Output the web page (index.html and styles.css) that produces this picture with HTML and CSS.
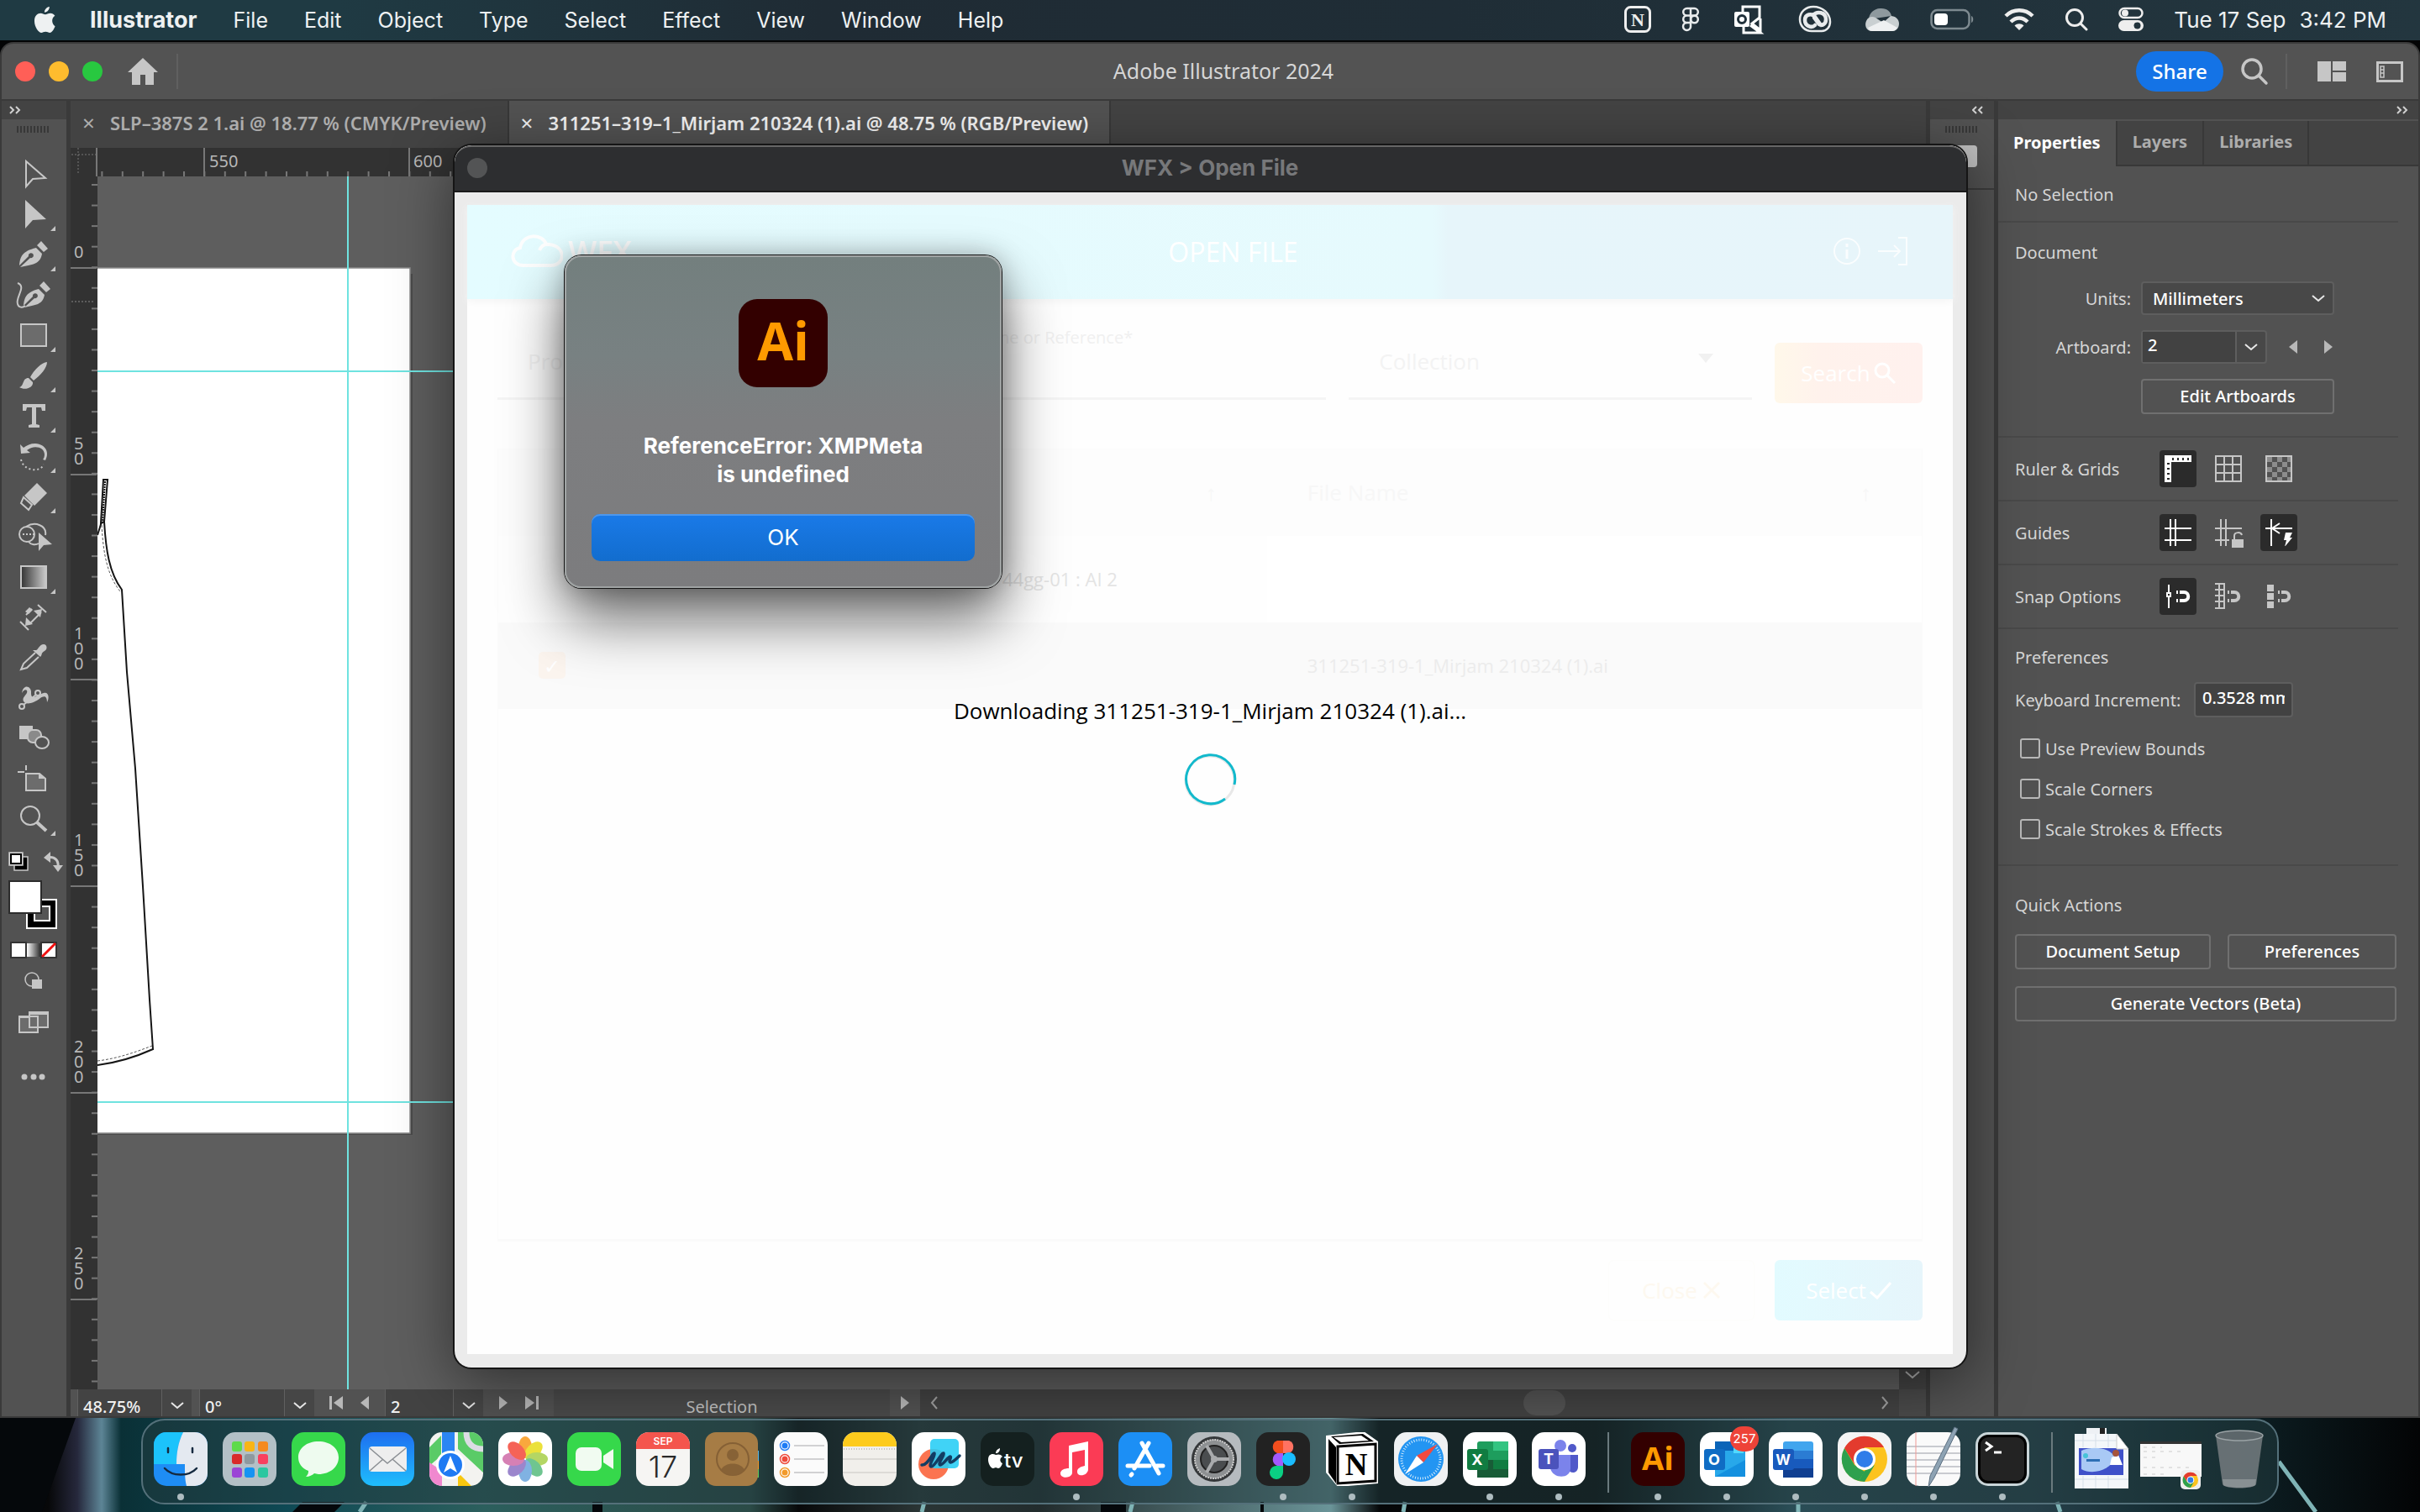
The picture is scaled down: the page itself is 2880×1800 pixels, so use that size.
FILE: index.html
```html
<!DOCTYPE html>
<html lang="en">
<head>
<meta charset="utf-8">
<title>Adobe Illustrator 2024</title>
<link rel="stylesheet" href="styles.css">
</head>
<body>
<header class="menubar">
  <svg class="apple" viewBox="0 0 28 34"><path fill="#eef1f2" d="M19.500 1c.3 3-2.600 7-6 7-.4-3 2.600-6.500 6-7zM26.500 25c-1.500 4-4 8-6.500 8-2 0-2.700-1.200-5.200-1.200S11.400 33 9.600 33C6.200 33 1 26 1 18.500 1 12 5 9 8.600 9c2.400 0 4 1.500 5.800 1.500S17.800 9 20.800 9c2 0 4.200 1.100 5.500 3-4.800 2.800-4 10 .2 13z"/></svg>
  <nav class="menus">
    <b>Illustrator</b><span>File</span><span>Edit</span><span>Object</span><span>Type</span><span>Select</span><span>Effect</span><span>View</span><span>Window</span><span>Help</span>
  </nav>
  <div class="tray">
    <svg width="32" height="34" viewBox="0 0 32 34"><rect x="1.500" y="2.500" width="29" height="29" rx="6" fill="none" stroke="#eee" stroke-width="3"/><text x="16" y="25" text-anchor="middle" class="serif" font-size="22" fill="#eee">N</text></svg>
    <svg width="22" height="30" viewBox="0 0 22 30" fill="none" stroke="#e8ebec" stroke-width="2.500"><path d="M11 2v22a4.500 4.500 0 1 1-5-5h5M11 2H6.500a4.300 4.300 0 0 0 0 8.600H11M11 2h4.500a4.300 4.300 0 0 1 0 8.600H11M6.500 10.600a4.300 4.300 0 0 0 0 8.600"/><circle cx="15.500" cy="15" r="4.300"/></svg>
    <svg width="42" height="36" viewBox="-4 0 42 36"><path fill="none" stroke="#fff" stroke-width="3" d="M11 11V3h20v13l-9 7 10 8V17M12 26v8h20l-12-9"/><rect x="1" y="9" width="18" height="18" rx="2" fill="#fff"/><circle cx="10" cy="18" r="4.500" fill="none" stroke="#20303a" stroke-width="3"/></svg>
    <svg width="46" height="34" viewBox="-3 0 46 34" fill="none" stroke="#e8ebec"><path stroke-width="2.500" d="M18 2C9 2 2 8 2 17c0 8 6 14 14 14h12c6 0 10-5 10-11C38 10 29 2 18 2z"/><path stroke-width="4.500" stroke-linecap="round" d="M20 24c-4 4-12 1-12-6s8-9 12-4l7 10M18 12c4-5 15-4 15 5 0 6-5 8-8 6l-6-8"/></svg>
    <svg width="42" height="30" viewBox="0 0 42 30"><path fill="#8e999e" d="M5 15C5 8 12 1 20 2c7 0 11 4 12 9z"/><path fill="#c9cfd1" d="M9 29C1 29 0 21 2 17c2-5 7-6 11-4l9 6 9-8c6 0 10 4 10 9 0 6-4 9-8 9z"/><path fill="#eef0f1" d="M4 25l19-9 16 9c-2 3-4 4-6 4H9c-2 0-4-1-5-4z"/></svg>
    <svg width="52" height="26" viewBox="0 0 52 26"><rect x="1.500" y="2" width="45" height="22" rx="7" fill="none" stroke="#7e8a90" stroke-width="2.500"/><rect x="5" y="6" width="16" height="14" rx="4" fill="#fff"/><path d="M49 9c3 1 3 7 0 8z" fill="#7e8a90"/></svg>
    <svg width="36" height="28" viewBox="0 0 36 28" fill="none" stroke="#eee" stroke-width="4.500"><path d="M2 10c9-9 23-9 32 0M8 17c6-6 14-6 20 0"/><path d="M12.500 21.500c3-3 8-3 11 0L18 27z" fill="#eee" stroke="none"/></svg>
    <svg width="28" height="28" viewBox="0 0 28 28" fill="none" stroke="#eee" stroke-width="3"><circle cx="12" cy="12" r="9.500"/><path stroke-linecap="round" d="M19 19l7 7"/></svg>
    <svg width="30" height="30" viewBox="0 0 30 30"><rect x="1.500" y="2" width="27" height="11" rx="5.500" fill="none" stroke="#eee" stroke-width="2.500"/><circle cx="8" cy="7.500" r="4" fill="#eee"/><rect x="0" y="16" width="30" height="13" rx="6.500" fill="#eee"/><circle cx="22.500" cy="22.500" r="4" fill="#22333c"/></svg>
  </div>
  <time class="clock"><span>Tue 17 Sep</span><span>3:42 PM</span></time>
</header>

<main class="app">
  <div class="titlebar">
    <div class="lights"><i class="red"></i><i class="amber"></i><i class="green"></i></div>
    <svg class="home" viewBox="0 0 36 32"><path fill="#c6c6c6" d="M18 0l18 17h-5v15H21V20h-6v12H5V17H0z"/></svg>
    <span class="vsep"></span>
    <h1>Adobe Illustrator 2024</h1>
    <button class="share">Share</button>
    <svg width="34" height="34" viewBox="0 0 34 34" fill="none" stroke="#c6c6c6" stroke-width="3.500"><circle cx="14" cy="14" r="11"/><path stroke-linecap="round" d="M22 22l9 9"/></svg>
    <span class="vsep"></span>
    <svg class="lay" width="34" height="24" viewBox="0 0 34 24" fill="#c6c6c6"><path d="M0 0h16v24H0zM18 0h16v11H18zM18 13h16v11H18z"/></svg>
    <svg width="32" height="26" viewBox="0 0 32 26"><path fill="none" stroke="#c6c6c6" stroke-width="3" d="M1.500 2.500h29v22h-29z"/><path fill="none" stroke="#c6c6c6" stroke-width="1.500" d="M5 7h4v13H5zM5 11h4M5 15h4"/></svg>
  </div>

  <div class="workspace">
    <aside class="tools">
      <div class="dockhead left"><svg viewBox="0 0 14 10"><path d="M1 1l4 4-4 4M8 1l4 4-4 4"/></svg></div>
      <div class="grip"></div>
      <div class="toollist">
        <button aria-label="Selection"><svg viewBox="0 0 48 36"><path fill="none" stroke="#c6c6c6" stroke-width="2" d="M15 3v30l8-9 15-1z"/></svg></button>
        <button aria-label="Direct selection" class="more"><svg viewBox="0 0 48 36"><path fill="#c6c6c6" d="M14 1v34l9-10 16-1z"/></svg></button>
        <button aria-label="Pen" class="more"><svg viewBox="0 0 48 36"><path fill="#c6c6c6" d="M8 33l12-11a3 3 0 1 0-2-2L7 31c1-10 3-17 20-21l7 7c-2 13-12 13-26 16zM28 7l5-5 8 9-5 4z"/></svg></button>
        <button aria-label="Curvature"><svg viewBox="0 0 48 36"><path fill="#c6c6c6" d="M13 33l12-11a3 3 0 1 0-2-2L12 31c1-10 3-16 18-20l7 7c-2 12-11 12-24 15zM31 7l5-5 8 9-5 4z"/><path fill="none" stroke="#c6c6c6" stroke-width="2" d="M5 4c11 4-3 17 0 25 1 4 6 5 9 2"/></svg></button>
        <button aria-label="Rectangle" class="more"><svg viewBox="0 0 48 36"><path fill="#6c6c6c" stroke="#c6c6c6" stroke-width="2" d="M9 5h30v26H9z"/></svg></button>
        <button aria-label="Paintbrush" class="more"><svg viewBox="0 0 48 36"><path fill="#c6c6c6" d="M40 2C34 2 24 12 20 20l4 4C32 18 40 9 40 2zM18 21c-8 0-5 10-11 11 6 4 17 1 16-6z"/></svg></button>
        <button aria-label="Type" class="more"><svg viewBox="0 0 48 36"><path fill="#c6c6c6" d="M11 4h27v8h-4l-1-4h-6v20l4 1v3H18v-3l4-1V8h-6l-1 4h-4z"/></svg></button>
        <button aria-label="Rotate" class="more"><svg viewBox="0 0 48 36"><path fill="#c6c6c6" d="M8 4l1 11 11-1-4-3c8-7 21-4 21 5 0 3-1 5-2 6l3 1c5-9 1-19-12-20-6 0-10 2-14 5z"/><path fill="none" stroke="#c6c6c6" stroke-width="2" stroke-dasharray="2 3" d="M9 22c3 14 23 16 27 6"/></svg></button>
        <button aria-label="Eraser" class="more"><svg viewBox="0 0 48 36"><path fill="#c6c6c6" d="M13 17L28 2l12 12-15 15z"/><path fill="none" stroke="#c6c6c6" stroke-width="2" d="M12 19l10 9-4 6-9-8z"/></svg></button>
        <button aria-label="Shape builder"><svg viewBox="0 0 48 36" fill="none" stroke="#c6c6c6" stroke-width="2"><ellipse cx="16" cy="15" rx="9" ry="9"/><path d="M15 6c11-7 25-1 23 10M18 24c3 4 9 4 12 2"/><path stroke-dasharray="2 2" d="M11 15h16"/><path fill="#c6c6c6" stroke="none" d="M30 13v22l6-7 10-1z"/></svg></button>
        <button aria-label="Gradient" class="more"><svg viewBox="0 0 48 36"><defs><linearGradient id="gt"><stop stop-color="#333"/><stop offset="1" stop-color="#ccc"/></linearGradient></defs><path fill="url(#gt)" stroke="#c6c6c6" stroke-width="2" d="M9 5h30v26H9z"/></svg></button>
        <button aria-label="Dimension"><svg viewBox="0 0 48 36"><path fill="none" stroke="#c6c6c6" stroke-width="2" d="M8 23l10 10M29 3l10 9M19 26l14-14M15 15l7-7" /><path fill="#c6c6c6" d="M14 28l1-10 8 8zM34 8l-2 10-8-8zM14 11l5-5 4 3-5 5z"/></svg></button>
        <button aria-label="Eyedropper"><svg viewBox="0 0 48 36"><path fill="#c6c6c6" d="M27 9c2 0 4-7 9-7 4 0 5 6 1 8-5 3-2 4-5 7l-9-8z"/><path fill="none" stroke="#c6c6c6" stroke-width="2" d="M26 12L12 25l-3 7 7-2 14-13"/></svg></button>
        <button aria-label="Puppet warp"><svg viewBox="0 0 48 36"><path fill="#c6c6c6" d="M10 12c2-12 12-8 11 0 0 10 8 2 15 0 6-2 7 6 4 11 0-8-4-8-8-5-7 6-16 8-19 5-5-6 5-9 3-14-2-2-4 0-6 3z"/><path fill="none" stroke="#c6c6c6" stroke-width="2" d="M12 26L27 14"/><circle cx="10" cy="28" r="3" fill="none" stroke="#c6c6c6" stroke-width="2"/><circle cx="29" cy="12" r="3" fill="#525252" stroke="#c6c6c6" stroke-width="2"/></svg></button>
        <button aria-label="Blend"><svg viewBox="0 0 48 36"><path fill="#c6c6c6" d="M7 3h16v7l-6 9H7z"/><rect x="17" y="8" width="16" height="15" rx="6" fill="#8a8a8a" stroke="#c6c6c6" stroke-width="2"/><ellipse cx="34" cy="23" rx="8" ry="7" fill="#525252" stroke="#c6c6c6" stroke-width="2"/></svg></button>
        <button aria-label="Artboard"><svg viewBox="0 0 48 36"><path fill="#6c6c6c" stroke="#c6c6c6" stroke-width="2" d="M15 12h16l7 6v14H15z"/><path fill="none" stroke="#c6c6c6" stroke-width="2" d="M15 2v6M5 10h8"/><path fill="#c6c6c6" d="M30 11l9 7h-9z"/></svg></button>
        <button aria-label="Zoom" class="more"><svg viewBox="0 0 48 36" fill="none" stroke="#c6c6c6"><circle cx="20" cy="14" r="11" stroke-width="2"/><path stroke-width="4" d="M28 22l11 10"/></svg></button>
      </div>
      <svg class="swatches" viewBox="0 0 76 300">
        <path fill="#000" stroke="#c6c6c6" stroke-width="1.500" d="M15 14h16v16H15z"/><path fill="#fff" stroke="#c6c6c6" stroke-width="1.500" d="M9 9h16v15H9z"/><path fill="none" stroke="#000" stroke-width="2" d="M11 11h12v11H11z"/>
        <path fill="none" stroke="#c6c6c6" stroke-width="3" d="M54 15c10-2 14 4 13 11"/><path fill="#c6c6c6" d="M50 15l8-7v13zM61 24h12l-6 8z"/>
        <path fill="#000" stroke="#fff" stroke-width="2" d="M30 65h35v34H30z"/><path fill="#555" stroke="#fff" stroke-width="2" d="M39 73h18v17H39z"/><path fill="#fff" stroke="#2c2c2c" stroke-width="2" d="M9 43h38v38H9z"/>
        <defs><linearGradient id="gs"><stop stop-color="#fff"/><stop offset="1" stop-color="#222"/></linearGradient></defs>
        <path fill="#fff" stroke="#333" stroke-width="2" d="M11 116h18v18H11z"/><path fill="url(#gs)" d="M30 117h17v16H30z"/><path fill="#fff" stroke="#333" stroke-width="2" d="M47 116h18v18H47z"/><path stroke="#f01010" stroke-width="3" d="M48 133l16-16"/>
        <ellipse cx="36" cy="160" rx="8" ry="8" fill="none" stroke="#c6c6c6" stroke-width="1.500"/><path fill="#c6c6c6" d="M36 160h12v11H36z"/>
        <path fill="#6c6c6c" stroke="#c6c6c6" stroke-width="2" d="M21 204h22v19H21zM33 199h22v18H33z"/><path fill="#c6c6c6" d="M32 198h24v4H32zM20 203h12v3H20z"/>
        <g fill="#c6c6c6"><circle cx="27" cy="276" r="3.500"/><circle cx="38" cy="276" r="3.500"/><circle cx="48" cy="276" r="3.500"/></g>
      </svg>
    </aside>

    <section class="document">
      <div class="tabs">
        <div class="tab"><span class="x">×</span>SLP–387S 2 1.ai @ 18.77 % (CMYK/Preview)</div>
        <div class="tab active"><span class="x">×</span>311251–319–1_Mirjam 210324 (1).ai @ 48.75 % (RGB/Preview)</div>
      </div>
      <svg class="hruler" width="100%" height="34">
        <defs><pattern id="ph" x="12" y="0" width="24.400" height="34" patternUnits="userSpaceOnUse"><path stroke="#777" stroke-width="2" d="M1 28v6"/></pattern></defs>
        <rect x="33" width="100%" height="34" fill="url(#ph)"/>
        <path stroke="#777" stroke-width="2" d="M31 0v34M159 0v34M403 0v34"/><path stroke="#777" stroke-dasharray="2 2" d="M1 8h30M9 0v30"/>
        <text x="165" y="23">550</text><text x="408" y="23">600</text>
      </svg>
      <div class="stage">
        <svg class="vruler" width="32" height="100%">
          <defs><pattern id="pv" x="0" y="9" width="32" height="24.560" patternUnits="userSpaceOnUse"><path stroke="#777" stroke-width="2" d="M25 1h7"/></pattern></defs>
          <rect width="32" height="100%" fill="url(#pv)"/>
          <path stroke="#777" stroke-width="2" d="M0 109h31M0 355h31M0 599h31M0 845h31M0 1091h31M0 1337h31"/><path stroke="#888" stroke-dasharray="2 2" d="M1 149h27"/>
          <text x="4" y="97">0</text>
          <text><tspan x="4" y="325">5</tspan><tspan x="4" y="343">0</tspan></text>
          <text><tspan x="4" y="551">1</tspan><tspan x="4" y="569">0</tspan><tspan x="4" y="587">0</tspan></text>
          <text><tspan x="4" y="797">1</tspan><tspan x="4" y="815">5</tspan><tspan x="4" y="833">0</tspan></text>
          <text><tspan x="4" y="1043">2</tspan><tspan x="4" y="1061">0</tspan><tspan x="4" y="1079">0</tspan></text>
          <text><tspan x="4" y="1289">2</tspan><tspan x="4" y="1307">5</tspan><tspan x="4" y="1325">0</tspan></text>
        </svg>
        <svg class="canvas" width="100%" height="100%">
          <g transform="translate(-116 -210)">
            <path fill="#4a4a4a" d="M116 326h375v1025H116z"/>
            <path fill="#fff" stroke="#8c8c8c" stroke-width="1.500" d="M114 319h374v1030H114z"/>
            <g fill="none" stroke="#151515" stroke-width="2">
              <path d="M123 571h5l-4 50-4 2z"/><path stroke-dasharray="2 1" d="M125 573l-3 48"/>
              <path d="M116 637l5-16M124 621c2 34 6 61 21 81l6 98 10 115 9 140 8 135 4 59c-20 9-42 16-66 19"/>
              <path stroke-width="1" stroke="#555" stroke-dasharray="3 2" d="M121 625c2 36 7 60 22 79M116 1263c24-3 44-10 65-18"/>
            </g>
            <path stroke="#6fe3e0" stroke-width="2" d="M414 210v1444M116 442h2200M116 1312h2200"/>
          </g>
        </svg>
        <div class="vscroll"><svg width="18" height="10" viewBox="0 0 18 10" fill="none" stroke="#b0b0b0" stroke-width="2"><path d="M1 1l8 7 8-7"/></svg></div>
      </div>
      <div class="status">
        <input class="f zoom" aria-label="Zoom" value="48.75%"><button class="chev" aria-label="Zoom list"><svg viewBox="0 0 16 9"><path d="M1 1l7 6 7-6"/></svg></button>
        <input class="f rot" aria-label="Rotation" value="0°"><button class="chev" aria-label="Rotation list"><svg viewBox="0 0 16 9"><path d="M1 1l7 6 7-6"/></svg></button>
        <div class="step"><svg width="16" height="16" viewBox="0 0 16 16"><path d="M0 0h3v16H0zM16 0v16L5 8z"/></svg><svg width="12" height="16" viewBox="0 0 12 16"><path d="M11 0v16L1 8z"/></svg></div>
        <input class="f num" aria-label="Artboard number" value="2"><button class="chev" aria-label="Artboard list"><svg viewBox="0 0 16 9"><path d="M1 1l7 6 7-6"/></svg></button>
        <div class="step"><svg width="12" height="16" viewBox="0 0 12 16"><path d="M1 0v16l10-8z"/></svg><svg width="16" height="16" viewBox="0 0 16 16"><path d="M13 0h3v16h-3zM0 0v16l11-8z"/></svg></div>
        <div class="mode">Selection</div>
        <div class="play"><svg width="10" height="16" viewBox="0 0 10 16"><path d="M0 0v16l10-8z"/></svg></div>
        <div class="hscroll"><svg width="9" height="16" viewBox="0 0 9 16"><path d="M8 1L2 8l6 7"/></svg><i></i><svg width="9" height="16" viewBox="0 0 9 16"><path d="M1 1l6 7-6 7"/></svg></div>
        <div class="corner"></div>
      </div>
    </section>

    <aside class="sidedock">
      <div class="dockhead"><svg viewBox="0 0 14 10"><path d="M5 1L1 5l4 4M12 1L8 5l4 4"/></svg></div>
      <div class="sidebox"><div class="grip"></div><i class="chip"></i></div>
    </aside>

    <aside class="panel">
      <div class="dockhead"><svg viewBox="0 0 14 10"><path d="M1 1l4 4-4 4M8 1l4 4-4 4"/></svg></div>
      <div class="ptabs"><button class="on">Properties</button><button>Layers</button><button>Libraries</button></div>
      <div class="sec none">No Selection</div>
      <div class="sec doc">
        <h2>Document</h2>
        <div class="row"><label for="units">Units:</label><div class="selwrap"><select id="units"><option>Millimeters</option></select><svg viewBox="0 0 16 9"><path d="M1 1l7 6 7-6"/></svg></div></div>
        <div class="row"><label for="ab">Artboard:</label><div class="combo"><input id="ab" value="2"><button aria-label="Artboards"><svg viewBox="0 0 16 9"><path d="M1 1l7 6 7-6"/></svg></button></div>
          <div class="arrows"><svg width="10" height="16" viewBox="0 0 10 16"><path d="M10 0v16L0 8z"/></svg><svg width="10" height="16" viewBox="0 0 10 16"><path d="M0 0v16l10-8z"/></svg></div></div>
        <div class="row"><span></span><button class="btn edit">Edit Artboards</button></div>
      </div>
      <div class="sec icons"><h2>Ruler &amp; Grids</h2>
        <button class="on" aria-label="Rulers"><svg viewBox="0 0 32 32"><path fill="#fff" d="M0 0h32v8H8v24H0z"/><path stroke="#2b2b2b" stroke-width="2" d="M10 3v3M16 3v3M22 3v3M28 3v3M3 10h3M3 16h3M3 22h3M3 28h3"/></svg></button>
        <button aria-label="Grid"><svg viewBox="0 0 32 32"><path fill="none" stroke="#c6c6c6" stroke-width="2" d="M1 1h30v30H1zM11 1v30M21 1v30M1 11h30M1 21h30"/></svg></button>
        <button aria-label="Transparency grid"><svg viewBox="0 0 32 32"><path fill="#8c8c8c" d="M2 2h6v6H2zM14 2h6v6h-6zM26 2h5v6h-5zM8 8h6v6H8zM20 8h6v6h-6zM2 14h6v6H2zM14 14h6v6h-6zM26 14h5v6h-5zM8 20h6v6H8zM20 20h6v6h-6zM2 26h6v5H2zM14 26h6v5h-6zM26 26h5v5h-5z"/><path fill="none" stroke="#c6c6c6" stroke-width="2" d="M1 1h30v30H1z"/></svg></button>
      </div>
      <div class="sec icons"><h2>Guides</h2>
        <button class="on" aria-label="Show guides"><svg viewBox="0 0 32 32"><path fill="none" stroke="#fff" stroke-width="2" d="M7 0v32M13 0v32M0 11h32M0 25h32"/></svg></button>
        <button aria-label="Lock guides"><svg viewBox="0 0 32 32" overflow="visible"><path fill="none" stroke="#c6c6c6" stroke-width="2" d="M7 0v32M13 0v32M0 11h32M0 25h17M23 25v-5c0-5 8-5 9-1"/><path fill="#c6c6c6" d="M20 24h14v10H20z"/></svg></button>
        <button class="on" aria-label="Smart guides"><svg viewBox="0 0 32 32"><path fill="none" stroke="#fff" stroke-width="2" d="M7 0v32M0 11h32M17 5l-9 6 9 6"/><path fill="#fff" d="M24 16h8l-3 6h3l-9 11 2-8h-3z"/></svg></button>
      </div>
      <div class="sec icons"><h2>Snap Options</h2>
        <button class="on" aria-label="Snap to point"><svg viewBox="0 0 32 32"><path fill="none" stroke="#fff" stroke-width="2" d="M5 2v9M5 17v13M3 12h4v4H3z"/><path fill="none" stroke="#fff" stroke-width="4" d="M18 11h5c7 0 7 10 0 10h-5"/><path stroke="#fff" stroke-width="4" d="M14 11h2M14 21h2"/></svg></button>
        <button aria-label="Snap to grid"><svg viewBox="0 0 32 32"><path fill="none" stroke="#c6c6c6" stroke-width="2" d="M11 1v30M5 1v30M0 1h12M0 8h12M0 15h12M0 22h12M0 30h12"/><path fill="none" stroke="#c6c6c6" stroke-width="4" d="M19 11h4c7 0 7 10 0 10h-4"/><path stroke="#c6c6c6" stroke-width="4" d="M15 11h2M15 21h2"/></svg></button>
        <button aria-label="Snap to pixel"><svg viewBox="0 0 32 32"><path fill="#c6c6c6" d="M2 2h8v8H2zM2 12h8v8H2zM2 22h8v8H2z"/><path fill="none" stroke="#c6c6c6" stroke-width="4" d="M19 11h4c7 0 7 10 0 10h-4"/><path stroke="#c6c6c6" stroke-width="4" d="M15 11h2M15 21h2"/></svg></button>
      </div>
      <div class="sec prefs">
        <h2>Preferences</h2>
        <div class="key"><label for="ki">Keyboard Increment:</label><input id="ki" value="0.3528 mm"></div>
        <label class="chk"><input type="checkbox">Use Preview Bounds</label>
        <label class="chk"><input type="checkbox">Scale Corners</label>
        <label class="chk"><input type="checkbox">Scale Strokes &amp; Effects</label>
      </div>
      <div class="quick">
        <h2>Quick Actions</h2>
        <div class="pair"><button class="btn">Document Setup</button><button class="btn">Preferences</button></div>
        <button class="btn wide">Generate Vectors (Beta)</button>
      </div>
    </aside>
  </div>
</main>

<section class="wfx" aria-label="WFX Open File">
  <div class="wfxbar"><i></i><h2>WFX &gt; Open File</h2></div>
  <div class="wfxbody">
    <div class="wfxhead">
      <div class="logo"><svg width="62" height="40" viewBox="0 0 62 40" fill="none" stroke="#fdfefe" stroke-width="4"><path d="M15 37C-1 37-1 18 11 16 14-2 38-1 42 12c24-1 24 25 6 25zM34 19c2-5 5-7 9-7"/></svg><span>WFX</span></div>
      <h3>OPEN FILE</h3>
      <div class="hicons"><svg width="34" height="34" viewBox="0 0 34 34" fill="none" stroke="#fff" stroke-width="2"><circle cx="17" cy="17" r="15"/><path stroke-width="3" d="M17 15v11M17 8v4"/></svg><svg width="36" height="34" viewBox="0 0 36 34" fill="none" stroke="#fff" stroke-width="2"><path d="M0 17h26M19 10l7 7-7 7M24 1h10v32H24"/></svg></div>
    </div>
    <div class="filters">
      <select aria-label="Product"><option>Product</option></select>
      <div class="named"><label for="nm">Name or Reference*</label><input id="nm"></div>
      <div class="coll"><select aria-label="Collection"><option>Collection</option></select><svg width="18" height="11" viewBox="0 0 18 11"><path fill="#f1f1f1" d="M0 0h18l-9 11z"/></svg></div>
      <button class="search">Search<svg width="28" height="28" viewBox="0 0 28 28" fill="none" stroke="#fff" stroke-width="3"><circle cx="11" cy="11" r="8"/><path d="M17 17l9 9"/></svg></button>
    </div>
    <div class="results">
      <table>
        <thead><tr><th><span class="up">↑</span></th><th>File Name<span class="up">↑</span></th></tr></thead>
        <tbody>
          <tr><td class="deep">44gg-01 : AI 2</td><td class="blank"></td></tr>
          <tr class="sel"><td><input type="checkbox" checked aria-label="Select file"></td><td>311251-319-1_Mirjam 210324 (1).ai</td></tr>
        </tbody>
      </table>
    </div>
    <div class="foot"><button class="close">Close<svg width="22" height="22" viewBox="0 0 22 22"><path stroke="#fdf8ef" stroke-width="3" d="M2 2l18 18M20 2L2 20"/></svg></button><button class="select">Select<svg width="26" height="22" viewBox="0 0 26 22"><path fill="none" stroke="#fff" stroke-width="3" d="M1 13l8 7L25 2"/></svg></button></div>
    <div class="loading"><p>Downloading 311251-319-1_Mirjam 210324 (1).ai...</p><svg width="64" height="64" viewBox="0 0 64 64" fill="none" stroke-width="3"><circle cx="32" cy="32" r="29" stroke="#e8e8e8"/><path stroke="#12b9cc" d="M61 37A29 29 0 1 0 50 54"/></svg></div>
  </div>
</section>

<section class="alert" role="alertdialog" aria-labelledby="alert-text">
  <svg width="106" height="106" viewBox="0 0 106 106"><rect width="106" height="105" rx="22" fill="#330000"/><text x="53" y="73" text-anchor="middle" class="adobe" font-size="62" fill="#ff9a00">Ai</text></svg>
  <p id="alert-text">ReferenceError: XMPMeta<br>is undefined</p>
  <button>OK</button>
</section>

<footer class="desk">
  <svg class="wall" width="100%" height="112" viewBox="0 0 2880 112" preserveAspectRatio="none">
    <defs><linearGradient id="w1"><stop stop-color="#050607"/><stop offset=".02" stop-color="#070809"/><stop offset=".032" stop-color="#26283c"/><stop offset=".042" stop-color="#5d8596"/><stop offset=".05" stop-color="#0a3036"/><stop offset=".12" stop-color="#0f4a55"/><stop offset=".2" stop-color="#2c5f5d"/><stop offset=".31" stop-color="#2b4b47"/><stop offset=".33" stop-color="#08090a"/><stop offset=".38" stop-color="#2a3535"/><stop offset=".43" stop-color="#222c2d"/><stop offset=".55" stop-color="#6a9498"/><stop offset=".57" stop-color="#060809"/><stop offset=".66" stop-color="#050606"/><stop offset=".74" stop-color="#2a4d56"/><stop offset=".84" stop-color="#27404a"/><stop offset=".9" stop-color="#122a30"/><stop offset=".94" stop-color="#0b1a1e"/><stop offset="1" stop-color="#030405"/></linearGradient></defs>
    <path fill="url(#w1)" d="M0 0h2880v112H0z"/>
    <path fill="#05080b" d="M0 0h90L50 112H0zM360 100h50l-12 12h-50zM705 100h12v12h-12zM1310 100h30v12h-30zM1500 100h4v12h-4z"/>
    <path fill="none" stroke="#7fb4b6" stroke-width="5" d="M436 100l-8 12M1100 100l-3 12M1348 100l-3 12M1672 100l-2 12M2140 100v12M2448 100l4 12M2712 52l44 60"/>
  </svg>
  <div class="dock">
    <div class="it run"><svg viewBox="0 0 64 64"><rect width="64" height="64" rx="15" fill="#1e8df5"/><path fill="#1cc3fb" d="M15 0h20c-6 12-8 24-8 38H0V15A15 15 0 0 1 15 0z"/><path fill="#e4e9f0" d="M35 0h14a15 15 0 0 1 15 15v34a15 15 0 0 1-15 15H39c-2-8-2-14-2-26H27C27 25 29 12 35 0z"/><path fill="none" stroke="#152a40" stroke-width="2.500" stroke-linecap="round" d="M17 19v5M46 19v5M13 43c9 10 29 10 38 0"/></svg></div>
    <div class="it"><svg viewBox="0 0 64 64"><rect width="64" height="64" rx="15" fill="#b3c0c6"/><g><rect x="11" y="11" width="12" height="12" rx="3" fill="#5edb4b"/><rect x="26" y="11" width="12" height="12" rx="3" fill="#f9b516"/><rect x="42" y="11" width="12" height="12" rx="3" fill="#f58a1f"/><rect x="11" y="26" width="12" height="12" rx="3" fill="#d92a2a"/><rect x="26" y="26" width="12" height="12" rx="3" fill="#8e999f"/><rect x="42" y="26" width="12" height="12" rx="3" fill="#f9405f"/><rect x="11" y="42" width="12" height="12" rx="3" fill="#9b45d6"/><rect x="26" y="42" width="12" height="12" rx="3" fill="#1593f3"/><rect x="42" y="42" width="12" height="12" rx="3" fill="#2cc7a0"/></g></svg></div>
    <div class="it"><svg viewBox="0 0 64 64"><rect width="64" height="64" rx="15" fill="#36d84b"/><path fill="#eefbef" d="M32 11c14 0 24 8 24 19s-10 20-24 20l-5-1c-2 2-6 4-10 4 3-3 3-5 3-7C12 43 8 37 8 30c0-11 10-19 24-19z"/></svg></div>
    <div class="it"><svg viewBox="0 0 64 64"><defs><linearGradient id="m" y2="1" x2="0"><stop stop-color="#1e6ef0"/><stop offset="1" stop-color="#1fbefc"/></linearGradient></defs><rect width="64" height="64" rx="15" fill="url(#m)"/><rect x="10" y="17" width="45" height="30" rx="4" fill="#eee"/><path fill="none" stroke="#8b8f94" stroke-width="1.500" d="M11 19l21 18 22-18M11 46l16-14M54 46L38 32"/></svg></div>
    <div class="it"><svg viewBox="0 0 64 64"><clipPath id="c"><rect width="64" height="64" rx="15"/></clipPath><g clip-path="url(#c)"><path fill="#f3f3f0" d="M0 0h64v64H0z"/><path fill="#5acb67" d="M34 0h30v48L34 20zM0 18l14-14v24L0 40z"/><path fill="#2b86f3" d="M15 0h15v30H15z"/><path fill="#f088cf" d="M0 36l15 10v18H0z"/><path fill="#f8c810" d="M34 64V48l16 16z"/><path fill="none" stroke="#dcdce4" stroke-width="7" d="M44 0c0 14 8 20 20 20"/><circle cx="25" cy="39" r="17" fill="#fff"/><circle cx="25" cy="39" r="14" fill="#1f7af3"/><path fill="#fff" d="M25 28l8 20-8-5-8 5z"/></g></svg></div>
    <div class="it"><svg viewBox="0 0 64 64"><rect width="64" height="64" rx="15" fill="#fff"/><g opacity=".85"><ellipse cx="32" cy="18" rx="8" ry="13" fill="#f99a1c"/><ellipse cx="32" cy="18" rx="8" ry="13" fill="#e8dc1a" transform="rotate(45 32 32)"/><ellipse cx="32" cy="18" rx="8" ry="13" fill="#a7d049" transform="rotate(90 32 32)"/><ellipse cx="32" cy="18" rx="8" ry="13" fill="#57bb7d" transform="rotate(135 32 32)"/><ellipse cx="32" cy="18" rx="8" ry="13" fill="#6aa5dd" transform="rotate(180 32 32)"/><ellipse cx="32" cy="18" rx="8" ry="13" fill="#8a72c4" transform="rotate(225 32 32)"/><ellipse cx="32" cy="18" rx="8" ry="13" fill="#cf6aa8" transform="rotate(270 32 32)"/><ellipse cx="32" cy="18" rx="8" ry="13" fill="#f4483a" transform="rotate(315 32 32)"/></g></svg></div>
    <div class="it"><svg viewBox="0 0 64 64"><rect width="64" height="64" rx="15" fill="#36d84b"/><rect x="10" y="18" width="31" height="28" rx="7" fill="#f1fbf1"/><path fill="#f1fbf1" d="M43 28l12-8v24l-12-8z"/></svg></div>
    <div class="it"><svg viewBox="0 0 64 64"><rect width="64" height="64" rx="15" fill="#f6f5f3"/><path fill="#f4554d" d="M15 0h34a15 15 0 0 1 15 15v5H0v-5A15 15 0 0 1 15 0z"/><text x="32" y="15" text-anchor="middle" font-size="12" font-weight="600" fill="#fff">SEP</text><text x="32" y="54" text-anchor="middle" font-size="36" font-weight="300" fill="#2a2a2a">17</text></svg></div>
    <div class="it"><svg viewBox="0 0 64 64"><path fill="#55b5e8" d="M58 22h7v12h-7z"/><path fill="#f29a2e" d="M58 34h7v10h-7z"/><path fill="#5bc95f" d="M58 44h7v10h-7z"/><rect width="63" height="64" rx="13" fill="#a67c45"/><circle cx="33" cy="32" r="19" fill="none" stroke="#856035" stroke-width="2"/><circle cx="33" cy="27" r="7" fill="#876236"/><path fill="#876236" d="M19 45c4-10 24-10 28 0-6 8-22 8-28 0z"/></svg></div>
    <div class="it"><svg viewBox="0 0 64 64"><rect width="64" height="64" rx="15" fill="#fbfbfb"/><path stroke="#c3c3c6" stroke-width="1.500" d="M24 16h36M24 32h36M24 48h36"/><g fill="#fff" stroke-width="1.500"><circle cx="13" cy="16" r="5.500" stroke="#2e82f6"/><circle cx="13" cy="32" r="5.500" stroke="#ee4a3c"/><circle cx="13" cy="48" r="5.500" stroke="#f29a2a"/></g><circle cx="13" cy="16" r="3.500" fill="#1d7bf5"/><circle cx="13" cy="32" r="3.500" fill="#ee4a3c"/><circle cx="13" cy="48" r="3.500" fill="#f29a2a"/></svg></div>
    <div class="it"><svg viewBox="0 0 64 64"><rect width="64" height="64" rx="15" fill="#f1efeb"/><path fill="#fdcb1d" d="M15 0h34a15 15 0 0 1 15 15v2H0v-2A15 15 0 0 1 15 0z"/><path stroke="#d5d3cf" stroke-width="1.500" d="M0 32h64M0 48h64"/><path stroke="#999" stroke-dasharray="1 2" d="M1 20h62"/></svg></div>
    <div class="it"><svg viewBox="0 0 64 64"><rect width="64" height="64" rx="15" fill="#fff"/><circle cx="26" cy="38" r="18" fill="#fb7450"/><rect x="22" y="8" width="34" height="35" rx="5" fill="#25cdf5" opacity=".88"/><path fill="none" stroke="#123d63" stroke-width="3.500" stroke-linecap="round" stroke-linejoin="round" d="M12 39c7 1 13-15 15-14 2 2-8 15-4 16 5 0 12-17 15-16 2 2-8 13-4 14 4 0 9-10 12-10 2 1-3 6 0 7 3 0 7-4 11-8"/></svg></div>
    <div class="it"><svg viewBox="0 0 64 64"><rect width="64" height="64" rx="15" fill="#14201f"/><path fill="#fff" d="M23 19c0 4-2 6-5 6 0-3 2-5 5-6zM26 37c-1 3-3 6-5 6l-3-1-3 1c-3 0-6-6-6-10 0-7 5-8 9-6 3-1 6-1 8 2-4 2-3 7 0 8z"/><text x="28" y="42" font-size="24" font-weight="500" fill="#fff">tv</text></svg></div>
    <div class="it run"><svg viewBox="0 0 64 64"><rect width="64" height="64" rx="15" fill="#fb3b55"/><path fill="#fff" d="M23 16l23-5v33c0 8-13 10-13 3 0-4 4-6 9-7V21l-15 3v24c0 7-14 8-14 1 0-4 5-6 10-6z"/></svg></div>
    <div class="it"><svg viewBox="0 0 64 64"><rect width="64" height="64" rx="15" fill="#1c8ff5"/><path stroke="#fff" stroke-width="5" stroke-linecap="round" d="M28 13l20 36M36 13L19 43M16 50l-1 1M11 40h26M46 40h7"/></svg></div>
    <div class="it"><svg viewBox="0 0 64 64"><rect width="64" height="64" rx="15" fill="#b6bbbf"/><circle cx="32" cy="32" r="27" fill="#35383a"/><circle cx="32" cy="32" r="23" fill="#8d9092" stroke="#d0d0d0" stroke-width="2" stroke-dasharray="2 1"/><circle cx="32" cy="32" r="16" fill="#4a4d4f" stroke="#222" stroke-width="2"/><path stroke="#a9abad" stroke-width="4" d="M32 32h18M32 32l-9-16M32 32l-9 16"/><circle cx="32" cy="32" r="4" fill="#a9abad"/></svg></div>
    <div class="it run"><svg viewBox="0 0 64 64"><rect width="64" height="64" rx="15" fill="#222"/><path fill="#f24e1e" d="M32 10h-7a8 8 0 0 0 0 15h7z"/><path fill="#ff7262" d="M32 10h7a8 8 0 0 1 0 15h-7z"/><path fill="#a259ff" d="M32 25h-7a8 8 0 0 0 0 15h7z"/><circle cx="39" cy="32" r="8" fill="#1abcfe"/><path fill="#0acf83" d="M32 40h-7a8 8 0 1 0 7 8z"/></svg></div>
    <div class="it run"><svg viewBox="0 0 64 64"><path fill="#fff" d="M1 4l45-5 17 12v50l-48 4L1 48z"/><path d="M4 8l9 10v43L4 48zM7 5l38-3 13 9-41 3z"/><path fill="#fff" d="M10 6l33-2 9 6-33 2z"/><path fill="#fff" stroke="#000" stroke-width="3" d="M15 17l45-3v44l-45 3z"/><text x="37" y="51" text-anchor="middle" class="serif" font-size="37">N</text></svg></div>
    <div class="it"><svg viewBox="0 0 64 64"><rect width="64" height="64" rx="15" fill="#eff1f3"/><circle cx="32" cy="32" r="27" fill="#2395f2"/><circle cx="32" cy="32" r="23" fill="none" stroke="#d7ecfb" stroke-width="3" stroke-dasharray="1 2"/><path fill="#f14a3e" d="M52 14L27 28l8 8z"/><path fill="#fff" d="M13 50l14-22 8 8z"/></svg></div>
    <div class="it run"><svg viewBox="0 0 64 64"><rect width="64" height="64" rx="15" fill="#fff"/><rect x="17" y="11" width="37" height="43" rx="3" fill="#1e9d5d"/><path fill="#33c481" d="M36 11h18v11H36z"/><path fill="#107c41" d="M36 33h18v11H36z"/><path fill="#185c37" d="M17 33h19v11h18v10H17z"/><rect x="5" y="20" width="25" height="25" rx="3" fill="#107c41"/><text x="17" y="39" text-anchor="middle" font-size="18" font-weight="700" fill="#fff">X</text></svg></div>
    <div class="it run"><svg viewBox="0 0 64 64"><rect width="64" height="64" rx="15" fill="#fff"/><circle cx="34" cy="16" r="7" fill="#7b83eb"/><circle cx="48" cy="19" r="5" fill="#5059c9"/><path fill="#5059c9" d="M40 27h15v14c0 9-10 9-13 2z"/><path fill="#7b83eb" d="M22 27h24v16c0 13-21 13-24 0z"/><rect x="8" y="20" width="24" height="24" rx="3" fill="#4b53bc"/><text x="20" y="38" text-anchor="middle" font-size="18" font-weight="700" fill="#fff">T</text></svg></div>
    <i class="sep"></i>
    <div class="it run"><svg viewBox="0 0 64 64"><rect width="64" height="64" rx="15" fill="#330000"/><text x="32" y="45" text-anchor="middle" class="adobe" font-size="38" fill="#ff9a00">Ai</text></svg></div>
    <div class="it run"><svg viewBox="0 0 64 64"><rect width="64" height="64" rx="15" fill="#fff"/><path fill="#0a64b8" d="M18 11h34v22H18z"/><path fill="#28a8ea" d="M18 22h36v31H18z"/><path fill="#50d9ff" d="M40 11h12v14H40z"/><path fill="#1490df" d="M18 53l36-20v20z"/><rect x="5" y="20" width="25" height="25" rx="3" fill="#0f6cc4"/><text x="17" y="39" text-anchor="middle" font-size="18" font-weight="700" fill="#fff">O</text></svg><em>257</em></div>
    <div class="it run"><svg viewBox="0 0 64 64"><rect width="64" height="64" rx="15" fill="#fff"/><rect x="17" y="11" width="36" height="43" rx="3" fill="#41a5ee"/><path fill="#2b7cd3" d="M17 22h36v10H17z"/><path fill="#185abd" d="M17 32h36v11H17z"/><path fill="#103f91" d="M17 43h36v11H17z"/><rect x="5" y="20" width="25" height="25" rx="3" fill="#185abd"/><text x="17" y="39" text-anchor="middle" font-size="17" font-weight="700" fill="#fff">W</text></svg></div>
    <div class="it run"><svg viewBox="0 0 64 64"><rect width="64" height="64" rx="15" fill="#f4f4f4"/><g id="chrome"><circle cx="32" cy="32" r="27" fill="#fcc31e"/><path fill="#e33b2e" d="M8 19a27 27 0 0 1 47-1H32L20 38z"/><path fill="#2da04e" d="M8 19l12 20 12 8-7 11A27 27 0 0 1 8 19z"/><path fill="#2da04e" d="M32 46l12-7-12 20-7-1z"/><circle cx="32" cy="32" r="13" fill="#fff"/><circle cx="32" cy="32" r="10" fill="#2f7de9"/></g></svg></div>
    <div class="it run"><svg viewBox="0 0 64 64" overflow="visible"><rect width="64" height="64" rx="15" fill="#fafafa"/><path stroke="#b9bcc2" stroke-width="1.500" d="M0 17h64M0 25h64M0 33h64M0 41h64M0 49h64"/><path stroke="#ef9a96" d="M11 0v64"/><path fill="#8ea3b4" stroke="#5b6f80" d="M57-6l4 2-28 58-7 11 2-13z"/></svg></div>
    <div class="it run"><svg viewBox="0 0 64 64"><rect width="64" height="64" rx="15" fill="#c9d5d8"/><rect x="3" y="3" width="58" height="58" rx="12" fill="#000"/><rect x="6" y="6" width="52" height="52" rx="9" fill="#232323"/><path fill="none" stroke="#fff" stroke-width="3" d="M12 12l7 5-7 5M22 24h9"/></svg></div>
    <i class="sep"></i>
    <div class="it"><svg viewBox="0 0 64 64" overflow="visible"><path fill="#eef1f5" d="M14-5h24v10H14z"/><path fill="#222" d="M30-5h6v8h-6z"/><path fill="#f4f7fa" d="M0 2h50l14 18v47H0z"/><path fill="none" stroke="#d5dfe8" d="M0 10h50M0 56h64M10 2v16M25 2v16M40 2v16M10 52v15M25 52v15M40 52v15"/><path fill="#3f51c9" d="M5 19h53v32H5z"/><path fill="#a9c9f5" d="M8 22c14-6 34-4 40 8-4 14-26 22-40 14z"/><circle cx="13" cy="28" r="3" fill="#47c3d8"/><path fill="#2c6fb5" d="M14 32h16v3H14z"/><path fill="#fff" d="M44 30l8-3 5 12H42z"/><circle cx="49" cy="25" r="4" fill="#a5533c"/><path fill="#fff" stroke="#ccc" d="M50 2v18h14z"/></svg></div>
    <div class="it"><svg viewBox="0 0 64 64" overflow="visible"><path fill="#f8f8f8" d="M-4 11h73v42H-4z"/><path fill="#333" d="M-4 11h73v3H-4z"/><path stroke="#ccc" stroke-dasharray="4 6" d="M0 18h22M0 23h50M0 30h20M0 42h60M0 50h30"/><rect x="44" y="45" width="24" height="23" rx="5" fill="#eee"/><use href="#chrome" transform="translate(45 46) scale(.34)"/></svg></div>
    <div class="it"><svg viewBox="0 0 64 64" overflow="visible"><path fill="#7a8184" fill-opacity=".8" d="M4 4h56l-8 58c-2 6-38 6-40 0z"/><ellipse cx="32" cy="4" rx="28" ry="6" fill="#5c666a" stroke="#9aa2a5" stroke-width="1.500"/><path fill="#aab0b2" fill-opacity=".5" d="M12 56h40l-1 7c-4 4-34 4-38 0z"/></svg></div>
  </div>
</footer>
</body>
</html>
```
FILE: styles.css
```css
* { box-sizing: border-box; }
body {
  margin: 0;
  min-height: 100vh;
  display: grid;
  grid-template-rows: 50px 1fr 112px;
  background: #030405;
  font-family: Inter, "Liberation Sans", sans-serif;
  position: relative;
}
button, input, select { font: inherit; color: inherit; margin: 0; border: 0; background: none; padding: 0; appearance: none; border-radius: 0; }
h1, h2, h3, p { margin: 0; font-weight: 400; }
svg { display: block; flex: none; }
.serif { font-family: "Liberation Serif", serif; font-weight: 700; }
.adobe { font-family: "Open Sans", sans-serif; font-weight: 700; }

/* system menu bar */
.menubar {
  height: 48px;
  display: flex;
  align-items: center;
  padding: 0 40px 2px 40px;
  font-size: 26px;
  color: #eef1f2;
  background: linear-gradient(90deg, #1f3a43, #1f3a43 14%, #1f2b34 34%, #1f2d36 60%, #23363f);
}
.apple { width: 27px; height: 33px; }
.menus { display: flex; align-items: baseline; gap: 43px; margin-left: 40px; font-size: 25px; }
.menus b { font-weight: 700; font-size: 27px; }
.tray { margin-left: auto; display: flex; align-items: center; gap: 36px; }
.clock { display: flex; gap: 16px; margin-left: 36px; }

/* application window */
.app {
  display: flex;
  flex-direction: column;
  border: 2px solid #3a3a3a;
  border-radius: 16px 16px 0 0;
  background: #3a3a3a;
  overflow: hidden;
  font-family: "Noto Sans", "Open Sans", sans-serif;
  color: #d6d6d6;
}
.titlebar {
  height: 66px;
  display: flex;
  align-items: center;
  padding: 0 18px 0 16px;
  background: #535353;
}
.titlebar h1 { flex: 1; text-align: center; font-size: 25px; padding: 0 0 2px 158px; }
.lights { display: flex; gap: 16px; }
.lights i { width: 24px; height: 24px; border-radius: 50%; }
.red { background: #ff5f57; }
.amber { background: #febc2e; }
.green { background: #28c840; }
.home { width: 36px; height: 32px; margin: 0 22px 0 30px; }
.vsep { width: 2px; height: 42px; background: #606060; }
.share { width: 104px; height: 48px; padding-bottom: 2px; border-radius: 24px; background: #1473e6; color: #fff; font-size: 24px; font-weight: 500; margin-right: 20px; }
.titlebar .share ~ .vsep { margin: 0 36px 0 20px; }
.lay { margin-right: 36px; }

.workspace { flex: 1; display: grid; grid-template-columns: 77px minmax(0, 1fr) 76px 500px; column-gap: 5px; padding-top: 2px; }
.dockhead { height: 22px; background: #434343; display: flex; align-items: center; justify-content: flex-end; padding-right: 12px; margin-bottom: 2px; }
.dockhead.left { justify-content: flex-start; padding-left: 9px; }
.dockhead svg { width: 14px; height: 10px; fill: none; stroke: #d0d0d0; stroke-width: 2; }
.grip { width: 38px; height: 8px; background: repeating-linear-gradient(90deg, #383838 0 2px, #525252 2px 4px); }

.tools { background: #525252; display: flex; flex-direction: column; }
.tools .grip { margin: 6px 18px 0; }
.toollist { display: flex; flex-direction: column; gap: 12px; padding: 31px 14px 0; }
.toollist button { width: 48px; height: 36px; position: relative; }
.toollist svg { width: 48px; height: 36px; }
.toollist .more::after { content: ""; position: absolute; right: -2px; bottom: -2px; border: 3px solid; border-color: transparent #c6c6c6 #c6c6c6 transparent; }
.swatches { width: 76px; height: 300px; margin-top: 13px; }

.document { display: flex; flex-direction: column; min-width: 0; background: #434343; }
.tabs { height: 54px; display: flex; font-size: 22px; font-weight: 600; background: #434343; }
.tab { display: flex; align-items: center; padding: 0 25px 2px 14px; color: #adadad; border-right: 2px solid #383838; white-space: nowrap; }
.tab.active { background: #525252; color: #f2f2f2; }
.tab .x { width: 33px; font-size: 26px; font-weight: 400; line-height: 20px; }
.hruler { background: #323232; height: 34px; margin-top: 2px; }
.hruler text, .vruler text { font-size: 20px; fill: #b8b8b8; }
.stage { flex: 1; display: flex; min-height: 0; background: #5e5e5e; }
.vruler { background: #323232; }
.canvas { flex: 1 1 0; min-width: 0; width: 0; height: auto; }
.vscroll { width: 32px; background: #434343; display: flex; align-items: flex-end; justify-content: center; padding-bottom: 12px; }

.status { height: 32px; display: flex; background: #525252; font-size: 20px; color: #f0f0f0; }
.status .f { height: 32px; background: #434343; padding: 8px 0 0 6px; border-left: 1px solid #606060; border-right: 1px solid #606060; font-weight: 500; }
.zoom { width: 101px; margin-left: 8px; }
.rot { width: 102px; margin-left: 9px; }
.num { width: 82px; }
.chev { width: 35px; background: #464646; display: flex; align-items: center; justify-content: center; padding-top: 6px; }
.chev svg, .selwrap svg, .combo svg { width: 16px; height: 9px; fill: none; stroke: #e8e8e8; stroke-width: 2; }
.step { width: 84px; display: flex; align-items: center; justify-content: center; gap: 20px; }
.step svg, .play svg, .arrows svg { fill: #b8b8b8; }
.mode { width: 400px; background: #4a4a4a; color: #c0c0c0; text-align: center; padding-top: 8px; line-height: 26px; }
.play { width: 36px; display: flex; align-items: center; justify-content: center; }
.hscroll { flex: 1; background: #424242; display: flex; align-items: center; justify-content: space-between; padding: 0 12px; }
.hscroll svg { fill: none; stroke: #a0a0a0; stroke-width: 2; }
.hscroll i { width: 50px; height: 30px; border-radius: 15px; background: #535353; margin-left: 320px; }
.corner { width: 32px; background: #4a4a4a; }

.sidedock { background: #525252; }
.sidebox { height: 82px; border-bottom: 2px solid #3c3c3c; padding: 6px 18px; }
.chip { display: block; width: 38px; height: 26px; margin-top: 15px; border-radius: 4px; background: #c0c0c0; }

/* properties panel */
.panel { background: #525252; font-size: 20px; }
.ptabs { height: 54px; display: flex; background: #434343; border-bottom: 2px solid #383838; font-weight: 700; color: #adadad; }
.ptabs button { padding: 0 18px 4px; border-right: 2px solid #383838; }
.ptabs .on { background: #525252; color: #fff; height: 54px; }
.sec { margin-right: 24px; padding-left: 20px; border-bottom: 2px solid #494949; }
.none { height: 67px; line-height: 68px; }
.doc { height: 256px; padding-top: 22px; display: flex; flex-direction: column; }
.doc h2, .prefs h2, .quick h2 { font-size: 20px; line-height: 28px; }
.doc h2 { margin-bottom: 20px; }
.row { display: grid; grid-template-columns: 138px auto 1fr; column-gap: 12px; height: 40px; margin-bottom: 18px; align-items: center; }
.row label { text-align: right; }
.selwrap { width: 230px; height: 40px; position: relative; display: grid; }
.selwrap select, .combo { height: 40px; background: #484848; border: 2px solid #5e5e5e; border-radius: 4px; color: #fff; padding-left: 12px; font-weight: 500; }
.selwrap svg { position: absolute; right: 11px; top: 16px; }
.combo { width: 150px; display: flex; padding: 0; }
.combo input { width: 112px; padding: 0 0 6px 6px; border-right: 2px solid #5e5e5e; background: #424242; }
.combo button { flex: 1; display: grid; place-items: center; }
.arrows { display: flex; gap: 32px; padding-left: 14px; }
.btn { height: 42px; padding-bottom: 1px; border: 2px solid #707070; border-radius: 4px; color: #fff; font-weight: 500; }
.edit { width: 230px; }
.icons { height: 76px; display: flex; align-items: center; padding-left: 20px; }
.icons h2 { width: 172px; font-size: 20px; }
.icons button { width: 44px; height: 44px; margin-right: 16px; padding: 6px; border-radius: 4px; }
.icons .on { background: #2b2b2b; }
.icons svg { width: 32px; height: 32px; }
.prefs { height: 282px; padding-top: 20px; }
.key { display: flex; align-items: center; justify-content: space-between; height: 42px; margin: 15px 125px 13px 0; }
.key input { width: 118px; height: 42px; background: #424242; border: 2px solid #5e5e5e; border-radius: 4px; color: #fff; padding: 0 8px 6px 8px; font-weight: 500; }
.chk { display: flex; align-items: center; gap: 6px; height: 48px; padding-left: 6px; }
.chk input { width: 24px; height: 24px; border: 2px solid #b8b8b8; border-radius: 3px; }
.quick { padding: 33px 26px 0 20px; }
.pair { display: grid; grid-template-columns: 233px 1fr; gap: 20px; margin: 20px 0; }
.wide { width: 100%; }

/* plug-in window */
.wfx {
  position: absolute;
  left: 541px;
  right: 540px;
  top: 173px;
  bottom: 172px;
  display: flex;
  flex-direction: column;
  border-radius: 20px;
  background: #ebebeb;
  overflow: hidden;
  box-shadow: 0 0 0 2px #151515, 0 16px 70px rgba(0, 0, 0, .5);
  font-family: "Open Sans", "Noto Sans", sans-serif;
}
.wfxbar { height: 56px; background: #2d2e30; border-top: 2px solid #666; border-bottom: 2px solid #1b1b1b; display: flex; align-items: center; padding: 0 40px 3px 15px; font-family: Inter, sans-serif; border-radius: 20px 20px 0 0; }
.wfxbar i { width: 24px; height: 24px; border-radius: 50%; background: #535455; }
.wfxbar h2 { flex: 1; text-align: center; font-size: 26px; font-weight: 700; color: #77787a; }
.wfxbody { position: relative; flex: 1; margin: 15px 16px 16px 15px; background: #fefefe; display: flex; flex-direction: column; }
.wfxhead { height: 112px; display: flex; align-items: center; justify-content: space-between; padding: 0 53px 2px 52px; background: linear-gradient(90deg, #e4fcff, #e6fafd 65%, #e6f5fa 66%, #e7f5fa); box-shadow: 0 3px 8px #f5f5f5; color: #fff; }
.logo { display: flex; align-items: center; font-size: 36px; font-weight: 600; gap: 6px; width: 160px; }
.wfxhead h3 { font-size: 32px; font-weight: 400; margin-left: 56px; }
.hicons { display: flex; gap: 20px; width: 160px; justify-content: flex-end; opacity: .8; }
.filters { display: grid; grid-template-columns: 1fr 1fr 1fr 176px; gap: 27px; padding: 0 36px; margin-top: 52px; height: 72px; font-size: 26px; }
.filters select, .filters input { width: 100%; height: 68px; padding: 0 36px 22px; color: #f3f3f3; border-bottom: 3px solid #f5f5f5; }
.named { position: relative; }
.named label { position: absolute; left: 58px; top: -18px; font-size: 20px; line-height: 24px; color: #f0f0f0; white-space: nowrap; }
.coll { position: relative; }
.coll svg { position: absolute; right: 46px; top: 13px; }
.search, .select { height: 72px; border-radius: 6px; color: #fff; display: flex; align-items: center; justify-content: center; gap: 3px; }
.search { background: linear-gradient(90deg, #fff8ea, #fff2ec 30%, #fff1ee); }
.results { flex: 1; margin: 54px 36px 0; border: 1px solid #fbfbfb; border-bottom: 3px solid #fafafa; background: #fefefe; }
table { width: 100%; border-collapse: collapse; font-size: 22px; table-layout: fixed; }
th, td { height: 103px; padding: 0 48px 2px; text-align: left; font-weight: 400; color: #f0f0f0; }
th:first-child { width: 54%; }
thead { background: #fdfdfd; }
th { font-size: 26px; color: #f7f7f7; }
.up { float: right; margin-right: 12px; }
.deep { padding-left: 600px; color: #e4e4e4; }
.blank { background: #fff; }
.sel { background: #fafafa; }
.sel td { color: #ececec; }
.sel input { width: 32px; height: 32px; border-radius: 5px; background: #fcf5ef; display: grid; place-items: center; }
.sel input::after { content: "✓"; color: #fff; font-size: 24px; }
.foot { height: 134px; display: flex; align-items: flex-start; justify-content: flex-end; gap: 24px; padding: 22px 36px 0; font-size: 26px; }
.foot .close { width: 174px; height: 72px; border: 1px solid #fdfdfb; border-radius: 6px; color: #fdf8ef; display: flex; align-items: center; justify-content: center; gap: 6px; }
.foot .select { width: 176px; gap: 4px; background: linear-gradient(90deg, #e2fbff, #e6f5fb); }
.loading { position: absolute; left: 0; right: 0; top: 584px; display: flex; flex-direction: column; align-items: center; gap: 33px; font-size: 26px; line-height: 36px; color: #000; }

/* error alert */
.alert {
  position: absolute;
  left: 672px;
  top: 304px;
  width: 520px;
  padding: 52px 32px 32px;
  display: flex;
  flex-direction: column;
  align-items: center;
  border-radius: 20px;
  background: linear-gradient(#737f7e, #788182 30%, #7d7e80 50%, #7c7c7e);
  box-shadow: inset 0 0 0 2px #a0a4a4, 0 0 0 1px #151515, 0 36px 70px rgba(0, 0, 0, .6), 0 0 30px rgba(0, 0, 0, .25);
  color: #fff;
  font-size: 26px;
}
.alert p { margin: 52px 0 30px; line-height: 34px; text-align: center; font-weight: 700; }
.alert button { width: 100%; height: 56px; padding-bottom: 2px; border-radius: 10px; background: linear-gradient(#1a7ae8, #126dce); box-shadow: inset 0 2px 0 #4d97ec; }

/* dock */
.desk { position: relative; display: flex; justify-content: center; }
.wall { position: absolute; left: 0; top: 0; }
.dock { position: relative; display: flex; height: 102px; margin-top: 1px; padding: 14px 4px 0; border: 2px solid #54707a; border-radius: 28px; background: rgba(35, 60, 64, .55); }
.it { width: 82px; height: 64px; padding: 0 9px; position: relative; }
.it svg { width: 64px; height: 64px; }
.run::after { content: ""; position: absolute; left: 37px; top: 73px; width: 8px; height: 8px; border-radius: 50%; background: #aebcc0; }
.sep { width: 2px; height: 72px; background: #6a7a7e; margin: 0 17px; }
.it em { position: absolute; left: 45px; top: -7px; width: 34px; height: 30px; border-radius: 15px; background: #ee4338; color: #fff; font-size: 15px; font-style: normal; line-height: 30px; text-align: center; }
```
